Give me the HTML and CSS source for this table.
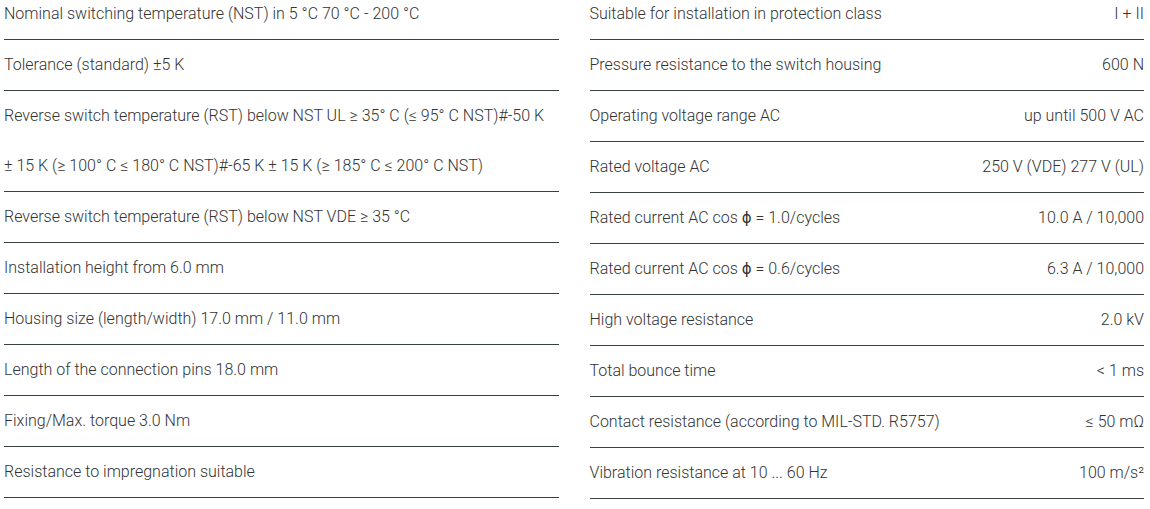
FILE: index.html
```html
<!DOCTYPE html>
<html lang="en">
<head>
<meta charset="utf-8">
<title>Specifications</title>
<link rel="stylesheet" href="styles.css">
</head>
<body>
<div class="specs">
  <ul class="col">
    <li class="row">Nominal switching temperature (NST) in 5 °C 70 °C - 200 °C</li>
    <li class="row">Tolerance (standard) ±5 K</li>
    <li class="row">Reverse switch temperature (RST) below NST UL ≥ 35° C (≤ 95° C NST)#-50 K ±&nbsp;15 K (≥ 100° C ≤ 180° C NST)#-65 K ±&nbsp;15 K (≥ 185° C ≤ 200° C NST)</li>
    <li class="row">Reverse switch temperature (RST) below NST VDE ≥ 35 °C</li>
    <li class="row">Installation height from 6.0 mm</li>
    <li class="row">Housing size (length/width) 17.0 mm / 11.0 mm</li>
    <li class="row">Length of the connection pins 18.0 mm</li>
    <li class="row">Fixing/Max. torque 3.0 Nm</li>
    <li class="row">Resistance to impregnation suitable</li>
  </ul>
  <ul class="col">
    <li class="row pair"><span>Suitable for installation in protection class</span><span>I + II</span></li>
    <li class="row pair"><span>Pressure resistance to the switch housing</span><span>600 N</span></li>
    <li class="row pair"><span>Operating voltage range AC</span><span>up until 500 V AC</span></li>
    <li class="row pair"><span>Rated voltage AC</span><span>250 V (VDE) 277 V (UL)</span></li>
    <li class="row pair"><span>Rated current AC cos <span class="phi">ϕ</span> = 1.0/cycles</span><span>10.0 A / 10,000</span></li>
    <li class="row pair"><span>Rated current AC cos <span class="phi">ϕ</span> = 0.6/cycles</span><span>6.3 A / 10,000</span></li>
    <li class="row pair"><span>High voltage resistance</span><span>2.0 kV</span></li>
    <li class="row pair"><span>Total bounce time</span><span>&lt; 1 ms</span></li>
    <li class="row pair"><span>Contact resistance (according to MIL-STD. R5757)</span><span>≤ 50 mΩ</span></li>
    <li class="row pair"><span>Vibration resistance at 10 ... 60 Hz</span><span>100 m/s²</span></li>
  </ul>
</div>
</body>
</html>
```
FILE: styles.css
```css
html, body {
  margin: 0;
  padding: 0;
  background: #fff;
}
body {
  font-family: Roboto, "Liberation Sans", sans-serif;
  font-weight: 300;
  font-size: 16px;
  color: #333;
  overflow: hidden;
}
.specs {
  display: grid;
  grid-template-columns: 1fr 1fr;
  column-gap: 31px;
  padding: 0 6px 0 4px;
  margin-top: -11px;
  align-items: start;
}
.col {
  list-style: none;
  margin: 0;
  padding: 0;
}
.row {
  line-height: 50px;
  border-bottom: 1px solid #3a4141;
}
.pair {
  display: flex;
  justify-content: space-between;
  gap: 16px;
}
.phi {
  font-family: "DejaVu Sans", sans-serif;
  font-weight: 400;
  font-size: 15px;
}
```
